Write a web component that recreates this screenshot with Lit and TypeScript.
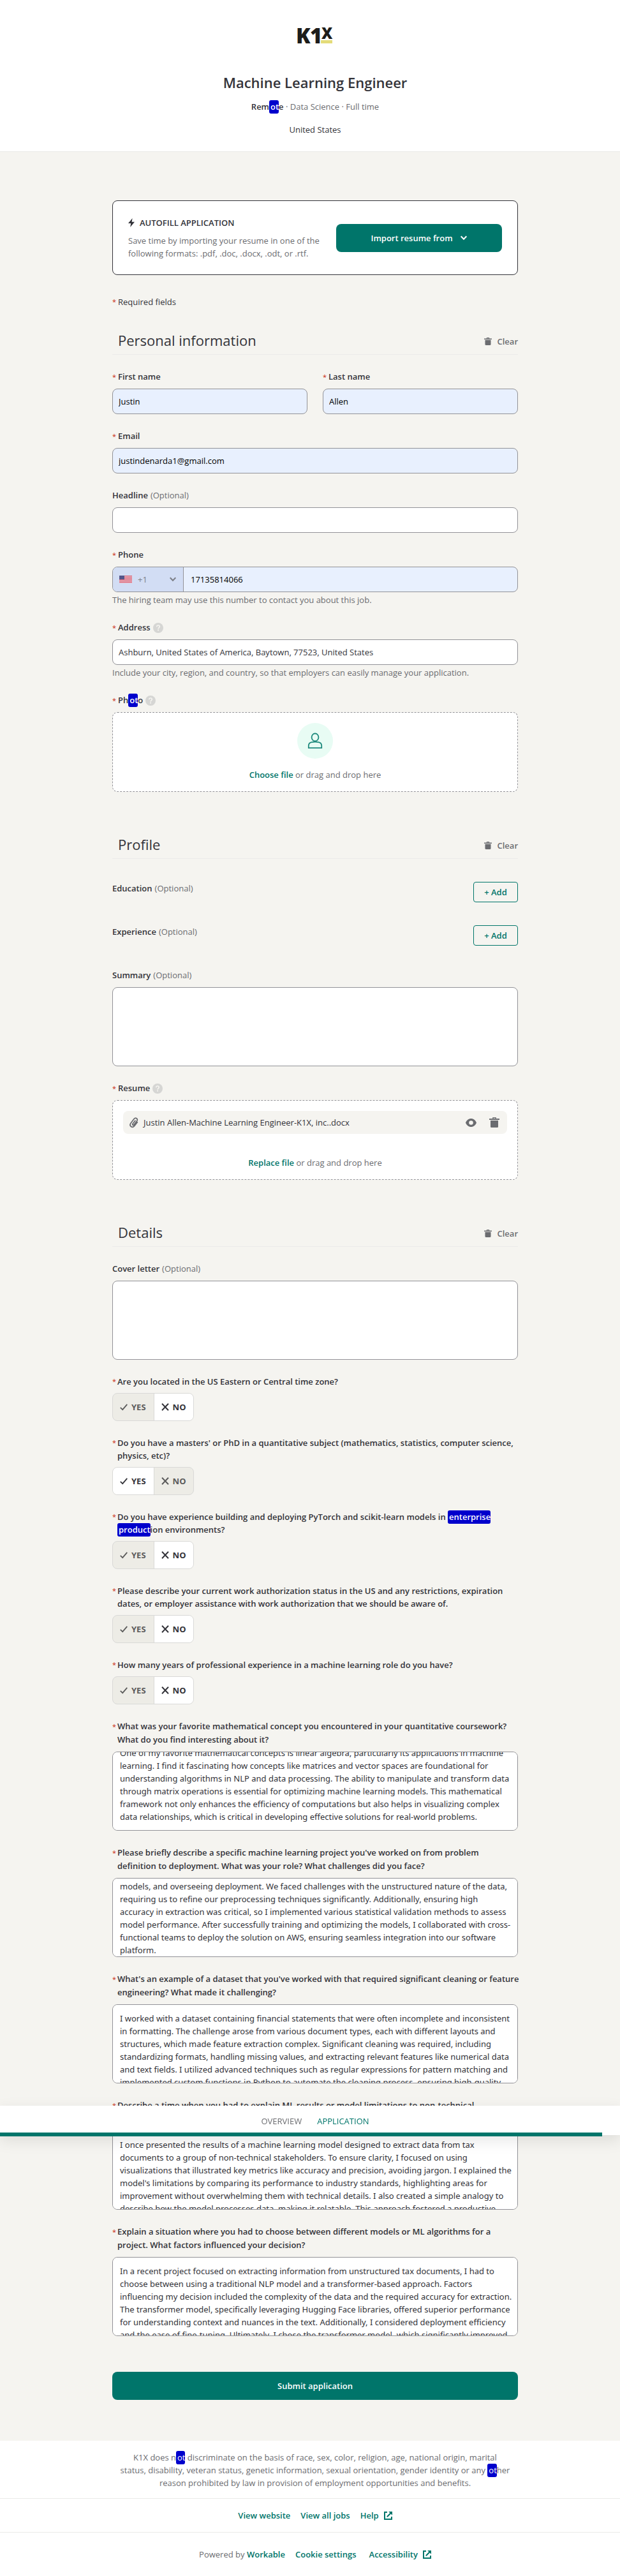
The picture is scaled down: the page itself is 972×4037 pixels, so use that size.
import { LitElement, html, css, svg, nothing, type TemplateResult } from "lit";
import { customElement } from "lit/decorators.js";
import { classMap } from "lit/directives/class-map.js";

type Content = string | TemplateResult;

interface YesNoQuestion {
  id: string;
  text: Content;
  answer: "yes" | "no";
}

interface EssayQuestion {
  id: string;
  text: string;
  value: string;
  scroll?: number;
}

const hit = (text: string) => html`<mark class="hit">${text}</mark>`;

const yesNoQuestions: YesNoQuestion[] = [
  { id: "zone", text: "Are you located in the US Eastern or Central time zone?", answer: "no" },
  {
    id: "degree",
    text: "Do you have a masters' or PhD in a quantitative subject (mathematics, statistics, computer science, physics, etc)?",
    answer: "yes",
  },
  {
    id: "deploying",
    text: html`Do you have experience building and deploying PyTorch and scikit-learn models in
      ${hit("enterprise product")}ion environments?`,
    answer: "no",
  },
  {
    id: "authorization",
    text: "Please describe your current work authorization status in the US and any restrictions, expiration dates, or employer assistance with work authorization that we should be aware of.",
    answer: "no",
  },
  { id: "years", text: "How many years of professional experience in a machine learning role do you have?", answer: "no" },
];

const essayQuestions: EssayQuestion[] = [
  {
    id: "concept",
    text: "What was your favorite mathematical concept you encountered in your quantitative coursework? What do you find interesting about it?",
    value:
      "One of my favorite mathematical concepts is linear algebra, particularly its applications in machine learning. I find it fascinating how concepts like matrices and vector spaces are foundational for understanding algorithms in NLP and data processing. The ability to manipulate and transform data through matrix operations is essential for optimizing machine learning models. This mathematical framework not only enhances the efficiency of computations but also helps in visualizing complex data relationships, which is critical in developing effective solutions for real-world problems.",
    scroll: 20,
  },
  {
    id: "project",
    text: "Please briefly describe a specific machine learning project you've worked on from problem definition to deployment. What was your role? What challenges did you face?",
    value:
      "models, and overseeing deployment. We faced challenges with the unstructured nature of the data, requiring us to refine our preprocessing techniques significantly. Additionally, ensuring high accuracy in extraction was critical, so I implemented various statistical validation methods to assess model performance. After successfully training and optimizing the models, I collaborated with cross-functional teams to deploy the solution on AWS, ensuring seamless integration into our software platform.",
    scroll: 9,
  },
  {
    id: "dataset",
    text: "What's an example of a dataset that you've worked with that required significant cleaning or feature engineering? What made it challenging?",
    value:
      "I worked with a dataset containing financial statements that were often incomplete and inconsistent in formatting. The challenge arose from various document types, each with different layouts and structures, which made feature extraction complex. Significant cleaning was required, including standardizing formats, handling missing values, and extracting relevant features like numerical data and text fields. I utilized advanced techniques such as regular expressions for pattern matching and implemented custom functions in Python to automate the cleaning process, ensuring high-quality",
  },
  {
    id: "explain",
    text: "Describe a time when you had to explain ML results or model limitations to non-technical stakeholders. How did you approach it?",
    value:
      "I once presented the results of a machine learning model designed to extract data from tax documents to a group of non-technical stakeholders. To ensure clarity, I focused on using visualizations that illustrated key metrics like accuracy and precision, avoiding jargon. I explained the model's limitations by comparing its performance to industry standards, highlighting areas for improvement without overwhelming them with technical details. I also created a simple analogy to describe how the model processes data, making it relatable. This approach fostered a productive",
  },
  {
    id: "tradeoff",
    text: "Explain a situation where you had to choose between different models or ML algorithms for a project. What factors influenced your decision?",
    value:
      "In a recent project focused on extracting information from unstructured tax documents, I had to choose between using a traditional NLP model and a transformer-based approach. Factors influencing my decision included the complexity of the data and the required accuracy for extraction. The transformer model, specifically leveraging Hugging Face libraries, offered superior performance for understanding context and nuances in the text. Additionally, I considered deployment efficiency and the ease of fine-tuning. Ultimately, I chose the transformer model, which significantly improved",
  },
];

const trashIcon = (size: number) => html`<svg width=${size} height=${size} viewBox="0 0 16 16" fill="currentColor" aria-hidden="true">
  <path d="M5.2 0h5.6v2H16v2H0V2h5.2zM6.6 1.3V2h2.8v-.7z" fill-rule="evenodd" />
  <path d="M2 5h12v9.4c0 .9-.7 1.6-1.6 1.6H3.6C2.7 16 2 15.300 2 14.400z" />
</svg>`;

const chevronIcon = html`<svg width="12" height="8" viewBox="0 0 12 8" fill="none" stroke="currentColor" stroke-width="2" aria-hidden="true">
  <path d="M1.700 1.300 6 5.800l4.300-4.500" />
</svg>`;

const externalIcon = html`<svg width="13" height="13" viewBox="0 0 13 13" fill="none" stroke="currentColor" stroke-width="2" aria-hidden="true">
  <path d="M5 1H1v11h11V8" />
  <path d="M4.800 8.200 11 2" />
  <path d="M7.200 0H13v5.800z" fill="currentColor" stroke="none" />
</svg>`;

const helpIcon = html`<svg class="help" width="16" height="16" viewBox="0 0 16 16" role="img" aria-label="Help">
  <circle cx="8" cy="8" r="8" fill="#d6d6d4" />
  <path d="M5.700 6.300C5.700 4.800 6.700 4 8 4s2.300.8 2.300 2.100C10.300 7.600 8.100 7.700 8.100 9.500" fill="none" stroke="#f5f4f0" stroke-width="1.700" />
  <rect x="7.100" y="10.600" width="1.900" height="1.900" fill="#f5f4f0" />
</svg>`;

const checkIcon = html`<svg width="12" height="12" viewBox="0 0 12 12" fill="none" stroke="currentColor" stroke-width="1.800" aria-hidden="true">
  <path d="M.8 6.800 4.200 10.200 11.300 1.800" />
</svg>`;

const crossIcon = html`<svg width="12" height="12" viewBox="0 0 12 12" fill="none" stroke="currentColor" stroke-width="2" aria-hidden="true">
  <path d="M1 .8 11 11.200M11 .8 1 11.200" />
</svg>`;

const boltIcon = html`<svg width="10" height="14" viewBox="0 0 10 14" fill="currentColor" aria-hidden="true">
  <path d="M6.600 0 0 8h4.200L3.200 14 10 5.700H5.600z" />
</svg>`;

const personIcon = html`<svg width="24" height="26" viewBox="0 0 24 26" fill="none" stroke="#1f8a7d" stroke-width="1.800" aria-hidden="true">
  <ellipse cx="12" cy="7.500" rx="5.400" ry="6" />
  <path d="M1.800 24.200v-3.600c0-3 2.200-5 5-5.500 3.300-.6 7-.6 10.400 0 2.800.5 5 2.500 5 5.500v3.600z" />
</svg>`;

const clipIcon = html`<svg width="15" height="17" viewBox="0 0 15 17" fill="none" stroke="currentColor" stroke-width="1.800" stroke-linecap="round" aria-hidden="true">
  <path d="M9.900 5.300 6 10.300c-.9 1.300.8 2.700 1.900 1.500l4.700-6.100c2.200-3.200-1.900-6.200-4.300-3.400L3 9.200c-3 4.200 2.300 8.400 5.600 4.500l4.700-6" />
</svg>`;

const eyeIcon = html`<svg width="17" height="13" viewBox="0 0 17 13" fill="currentColor" aria-hidden="true">
  <path fill-rule="evenodd" d="M8.500 0C12.400 0 15.400 2.500 17 6.500 15.400 10.500 12.400 13 8.500 13S1.600 10.500 0 6.500C1.600 2.500 4.600 0 8.500 0zm0 3.200a3.300 3.300 0 1 0 0 6.600 3.300 3.300 0 0 0 0-6.600z" />
</svg>`;

const stripes = [0, 2, 4, 6, 8, 10];
const flagIcon = html`<svg width="20" height="12" viewBox="0 0 20 12" aria-hidden="true">
  <rect width="20" height="12" fill="#e9b9c6" />
  ${stripes.map((y) => svg`<rect y=${y} width="20" height="1" fill="#d86577" />`)}
  <rect width="8" height="6" fill="#54568a" />
</svg>`;

const logo = html`<svg class="logo" width="54" height="24" viewBox="0 0 54 24" role="img" aria-label="K1X">
  <g fill="#1d1d1b" font-family="Open Sans, sans-serif" font-weight="800">
    <text x="-3" y="24" font-size="33">K</text>
    <text x="19" y="24" font-size="33">1</text>
    <text x="37" y="17" font-size="24">X</text>
  </g>
  <rect x="36" y="19" width="18" height="5" fill="#e4dc79" />
</svg>`;

@customElement("app-root")
export class AppRoot extends LitElement {
  static styles = css`
    :host {
      --ink: #333339;
      --muted: #6b6c70;
      --brand: #00756a;
      --paper: #f5f4f0;
      --line: #ebebe9;
      --edge: #929297;
      display: block;
      font: 13px/20px "Open Sans", "Noto Sans", sans-serif;
      color: var(--ink);
      background: #fff;
    }
    *,
    *::before {
      box-sizing: border-box;
    }
    h1,
    h2,
    h3,
    p,
    fieldset,
    legend {
      margin: 0;
      padding: 0;
      border: 0;
      font-weight: 400;
    }
    button,
    input,
    textarea {
      font: inherit;
      color: inherit;
      margin: 0;
    }
    button {
      background: none;
      border: 0;
      padding: 0;
      cursor: pointer;
    }
    a {
      color: var(--brand);
      font-weight: 600;
      text-decoration: none;
    }
    svg {
      display: block;
      flex: none;
    }
    .logo {
      overflow: visible;
    }
    .page {
      position: relative;
    }
    .hit {
      background: #0000cc;
      color: #fff;
      border-radius: 3px;
      padding: 1px 0 2px 2px;
      -webkit-box-decoration-break: clone;
      box-decoration-break: clone;
    }
    .column {
      width: 100%;
      max-width: 636px;
      margin: 0 auto;
    }
    .header {
      display: flex;
      flex-direction: column;
      align-items: center;
      padding: 44px 16px 24px 32px;
      border-bottom: 1px solid var(--line);
      text-align: center;
    }
    .title {
      margin: 46px 0 13px;
      font-size: 22px;
      line-height: 30px;
      font-weight: 600;
    }
    .facts {
      margin-bottom: 16px;
      color: var(--muted);
    }
    .facts strong {
      color: var(--ink);
      font-weight: 600;
    }
    .main {
      background: var(--paper);
      padding: 76px 16px 64px 32px;
    }
    .autofill {
      display: flex;
      align-items: center;
      gap: 24px;
      min-height: 117px;
      padding: 0 24px;
      background: #fff;
      border: 1px solid var(--ink);
      border-radius: 8px;
    }
    .autofill-text {
      flex: 1;
      color: var(--muted);
    }
    .autofill-title {
      display: flex;
      align-items: center;
      gap: 8px;
      margin-bottom: 8px;
      font-size: 13px;
      font-weight: 600;
      color: var(--ink);
    }
    .primary {
      display: flex;
      align-items: center;
      justify-content: center;
      gap: 11px;
      height: 44px;
      border-radius: 8px;
      background: var(--brand);
      color: #fff;
      font-weight: 600;
    }
    .import {
      width: 260px;
    }
    .submit {
      width: 100%;
      margin-top: 56px;
    }
    .legend {
      display: flex;
      margin: 32px 0 34px;
    }
    .req {
      flex: none;
      width: 9px;
      color: #c9260c;
      font-size: 11px;
      font-weight: 400;
    }
    .section + .section {
      margin-top: 66px;
    }
    .head {
      display: flex;
      align-items: flex-end;
      justify-content: space-between;
      margin-bottom: 24px;
      padding: 0 0 6px 9px;
      border-bottom: 1px solid var(--line);
    }
    .head-title {
      font-size: 22px;
      line-height: 32px;
    }
    .clear {
      display: flex;
      align-items: center;
      gap: 8px;
      padding-bottom: 4px;
      color: var(--muted);
      font-weight: 600;
    }
    .fields {
      display: flex;
      flex-direction: column;
      gap: 24px;
    }
    .pair {
      display: grid;
      grid-template-columns: 1fr 1fr;
      gap: 24px;
    }
    .label {
      display: flex;
      margin-bottom: 8px;
      line-height: 21px;
      font-weight: 600;
    }
    .label.compact {
      line-height: 20px;
    }
    .question {
      margin: 0 -2px 0 -1px;
    }
    .optional {
      margin-left: 4px;
      color: var(--muted);
      font-weight: 400;
    }
    .help {
      align-self: center;
      margin-left: 4px;
    }
    .box {
      display: block;
      width: 100%;
      height: 40px;
      padding: 0 9px;
      border: 1px solid var(--edge);
      border-radius: 8px;
      background: #fff;
      outline: none;
    }
    .box.filled {
      background: #e8f0fe;
      color: #000;
    }
    .area {
      height: 124px;
      padding: 11px 8px 11px 11px;
      resize: none;
      font-family: "Noto Sans", "Open Sans", sans-serif;
      line-height: 20px;
      scrollbar-width: none;
    }
    .phone {
      display: flex;
      padding: 0;
      overflow: hidden;
    }
    .country {
      display: flex;
      align-items: center;
      width: 111px;
      padding: 0 10px;
      gap: 9px;
      border-right: 1px solid var(--edge);
      background: #d2ddf4;
      color: #7c7f87;
    }
    .country svg:last-child {
      margin-left: auto;
    }
    .number {
      flex: 1;
      min-width: 0;
      padding: 0 11px;
      border: 0;
      background: none;
      outline: none;
    }
    .hint {
      margin-top: 3px;
      line-height: 18px;
      color: var(--muted);
    }
    .drop {
      display: flex;
      flex-direction: column;
      align-items: center;
      justify-content: space-between;
      height: 125px;
      padding: 16px;
      border: 1px dashed var(--edge);
      border-radius: 8px;
      background: #fff;
      color: var(--muted);
    }
    .link {
      color: var(--brand);
      font-weight: 600;
    }
    .avatar {
      display: grid;
      place-items: center;
      width: 56px;
      height: 56px;
      border-radius: 50%;
      background: #e8fcf4;
    }
    .file {
      display: flex;
      align-items: center;
      width: 100%;
      height: 36px;
      padding: 0 12px 0 9px;
      gap: 8px;
      border-radius: 8px;
      background: var(--paper);
    }
    .file-name {
      flex: 1;
      color: var(--ink);
    }
    .file-action + .file-action {
      margin-left: 12px;
    }
    .entries {
      display: flex;
      flex-direction: column;
      gap: 36px;
      margin: 12px 0;
    }
    .entry {
      display: flex;
      justify-content: space-between;
      align-items: flex-start;
    }
    .add {
      width: 70px;
      height: 32px;
      border: 1px solid var(--brand);
      border-radius: 4px;
      color: var(--brand);
      font-weight: 600;
    }
    .toggle {
      display: inline-flex;
      height: 44px;
      border: 1px solid #d9d9d7;
      border-radius: 8px;
      overflow: hidden;
      background: #edece6;
      vertical-align: top;
    }
    .choice {
      display: flex;
      align-items: center;
      gap: 6px;
      padding: 0 12px 0 11px;
      color: #5b5b5b;
      font-weight: 700;
      cursor: pointer;
    }
    .choice + .choice {
      border-left: 1px solid #d9d9d7;
    }
    .choice.on {
      background: #fff;
      color: var(--ink);
    }
    .radio {
      appearance: none;
      width: 0;
      height: 0;
      margin: 0 -6px 0 0;
    }
    .tabs {
      position: absolute;
      top: 3300px;
      left: 0;
      right: 0;
      display: flex;
      justify-content: center;
      gap: 24px;
      height: 46px;
      padding: 14px 0 0 16px;
      background: #fff;
      box-shadow: 0 8px 24px rgba(0, 0, 0, 0.1);
    }
    .tab {
      color: var(--muted);
      font-weight: 400;
    }
    .tab.current {
      color: var(--brand);
    }
    .progress {
      position: absolute;
      left: 0;
      right: 0;
      bottom: -2px;
      height: 6px;
      margin-right: 28px;
      background: var(--brand);
    }
    .footer {
      text-align: center;
      color: var(--muted);
    }
    .notice {
      max-width: 628px;
      margin: 0 auto;
      padding: 16px 0 14px 16px;
    }
    .links,
    .powered {
      display: flex;
      justify-content: center;
      gap: 16px;
      border-top: 1px solid var(--line);
      padding: 16px 0 16px 16px;
    }
    .powered {
      padding: 24px 0 24px 16px;
    }
    .external {
      display: flex;
      align-items: center;
      gap: 8px;
    }
    .powered .external {
      margin-left: 4px;
    }
  `;

  firstUpdated() {
    for (const question of essayQuestions) {
      const area = this.renderRoot.querySelector<HTMLTextAreaElement>(`#${question.id}`);
      if (area && question.scroll) area.scrollTop = question.scroll;
    }
  }

  private star = html`<span class="req" aria-hidden="true">*</span>`;

  private label(id: string, text: Content, kind: "required" | "optional", help = false) {
    return html`<label class="label" for=${id}>
      ${kind === "required" ? this.star : nothing}<span>${text}</span>
      ${kind === "optional" ? html`<span class="optional">(Optional)</span>` : nothing}
      ${help ? helpIcon : nothing}
    </label>`;
  }

  private input(id: string, text: string, value: string, kind: "required" | "optional" = "required", filled = true) {
    return html`<div>
      ${this.label(id, text, kind)}
      <input class=${classMap({ box: true, filled })} id=${id} type="text" .value=${value} />
    </div>`;
  }

  private head(text: string) {
    return html`<div class="head">
      <h2 class="head-title">${text}</h2>
      <button class="clear" type="button">${trashIcon(12)}Clear</button>
    </div>`;
  }

  private entry(text: string) {
    return html`<div class="entry">
      <div class="label"><span>${text}</span><span class="optional">(Optional)</span></div>
      <button class="add" type="button" aria-label="Add ${text}">+ Add</button>
    </div>`;
  }

  private choice(question: YesNoQuestion, value: "yes" | "no") {
    const on = question.answer === value;
    return html`<label class=${classMap({ choice: true, on })}>
      <input class="radio" type="radio" name=${question.id} value=${value} ?checked=${on} />
      ${value === "yes" ? checkIcon : crossIcon}${value.toUpperCase()}
    </label>`;
  }

  private yesNo(question: YesNoQuestion) {
    return html`<div role="radiogroup" aria-labelledby=${question.id}>
      <div class="label compact" id=${question.id}>${this.star}<span class="question">${question.text}</span></div>
      <div class="toggle">${this.choice(question, "yes")}${this.choice(question, "no")}</div>
    </div>`;
  }

  private essay(question: EssayQuestion) {
    return html`<div>
      <label class="label" for=${question.id}>${this.star}<span class="question">${question.text}</span></label>
      <textarea class="box area" id=${question.id} .value=${question.value}></textarea>
    </div>`;
  }

  render() {
    return html`<div class="page">
      <header class="header">
        ${logo}
        <h1 class="title">Machine Learning Engineer</h1>
        <p class="facts"><strong>Rem${hit("ot")}e</strong> · Data Science · Full time</p>
        <p>United States</p>
      </header>

      <main class="main">
        <form class="column">
          <div class="autofill">
            <div class="autofill-text">
              <h3 class="autofill-title">${boltIcon}AUTOFILL APPLICATION</h3>
              <p>Save time by importing your resume in one of the following formats: .pdf, .doc, .docx, .odt, or .rtf.</p>
            </div>
            <button class="primary import" type="button">Import resume from ${chevronIcon}</button>
          </div>

          <p class="legend">${this.star}Required fields</p>

          <section class="section">
            ${this.head("Personal information")}
            <div class="fields">
              <div class="pair">${this.input("first", "First name", "Justin")}${this.input("last", "Last name", "Allen")}</div>
              ${this.input("email", "Email", "justindenarda1@gmail.com")}
              ${this.input("headline", "Headline", "", "optional", false)}
              <div>
                ${this.label("phone", "Phone", "required")}
                <div class="box filled phone">
                  <button class="country" type="button" aria-label="Country code">${flagIcon}<span>+1</span>${chevronIcon}</button>
                  <input class="number" id="phone" type="tel" .value=${"17135814066"} />
                </div>
                <p class="hint">The hiring team may use this number to contact you about this job.</p>
              </div>
              <div>
                ${this.label("address", "Address", "required", true)}
                <input class="box" id="address" type="text" .value=${"Ashburn, United States of America, Baytown, 77523, United States"} />
                <p class="hint">Include your city, region, and country, so that employers can easily manage your application.</p>
              </div>
              <div>
                ${this.label("photo", html`Ph${hit("ot")}o`, "required", true)}
                <div class="drop">
                  <span class="avatar">${personIcon}</span>
                  <p><button class="link" id="photo" type="button">Choose file</button> or drag and drop here</p>
                </div>
              </div>
            </div>
          </section>

          <section class="section">
            ${this.head("Profile")}
            <div class="fields">
              <div class="entries">${this.entry("Education")}${this.entry("Experience")}</div>
              <div>
                ${this.label("summary", "Summary", "optional")}
                <textarea class="box area" id="summary"></textarea>
              </div>
              <div>
                ${this.label("resume", "Resume", "required", true)}
                <div class="drop">
                  <div class="file">
                    ${clipIcon}<span class="file-name">Justin Allen-Machine Learning Engineer-K1X, inc..docx</span>
                    <button class="file-action" type="button" aria-label="Preview file">${eyeIcon}</button>
                    <button class="file-action" type="button" aria-label="Delete file">${trashIcon(16)}</button>
                  </div>
                  <p><button class="link" id="resume" type="button">Replace file</button> or drag and drop here</p>
                </div>
              </div>
            </div>
          </section>

          <section class="section">
            ${this.head("Details")}
            <div class="fields">
              <div>
                ${this.label("cover", "Cover letter", "optional")}
                <textarea class="box area" id="cover"></textarea>
              </div>
              ${yesNoQuestions.map((q) => this.yesNo(q))} ${essayQuestions.map((q) => this.essay(q))}
            </div>
          </section>

          <button class="primary submit" type="button">Submit application</button>
        </form>
      </main>

      <footer class="footer">
        <p class="notice">
          K1X does n${hit("ot")} discriminate on the basis of race, sex, color, religion, age, national origin, marital status,
          disability, veteran status, genetic information, sexual orientation, gender identity or any ${hit("ot")}her reason
          prohibited by law in provision of employment opportunities and benefits.
        </p>
        <nav class="links">
          <a href="#website">View website</a>
          <a href="#jobs">View all jobs</a>
          <a class="external" href="#help">Help ${externalIcon}</a>
        </nav>
        <div class="powered">
          <span>Powered by <a href="#workable">Workable</a></span>
          <a href="#cookies">Cookie settings</a>
          <a class="external" href="#accessibility">Accessibility ${externalIcon}</a>
        </div>
      </footer>

      <nav class="tabs">
        <a class="tab" href="#overview">OVERVIEW</a>
        <a class="tab current" href="#application">APPLICATION</a>
        <span class="progress"></span>
      </nav>
    </div>`;
  }
}
